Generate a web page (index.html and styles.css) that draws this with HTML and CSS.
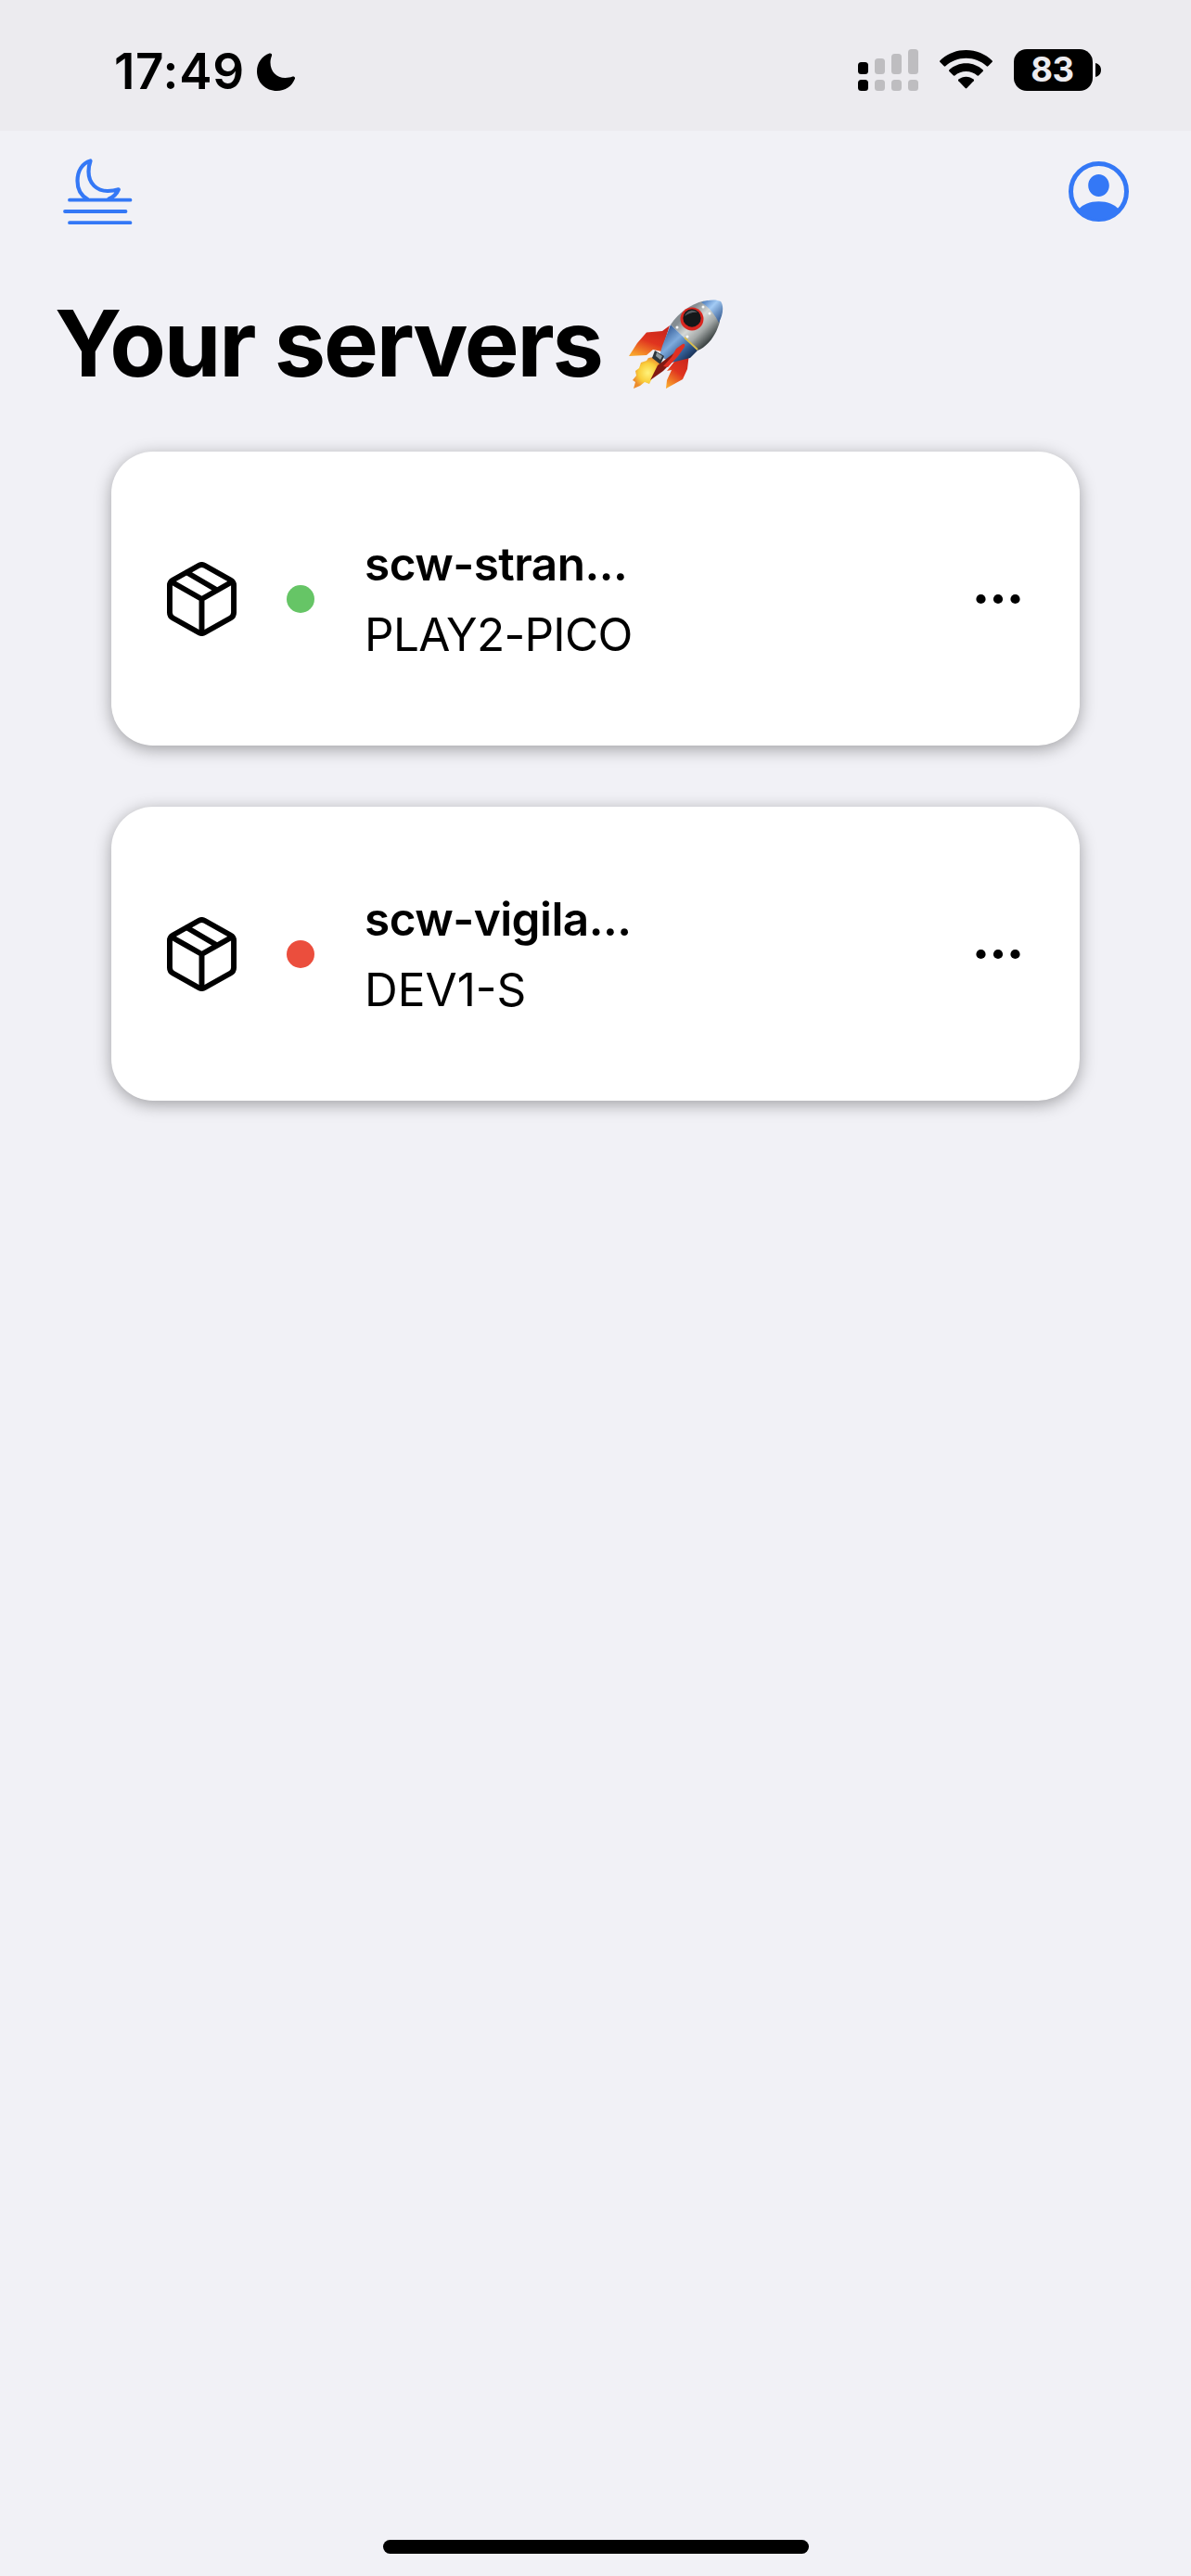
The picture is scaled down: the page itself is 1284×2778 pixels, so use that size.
FILE: index.html
```html
<!DOCTYPE html>
<html lang="en">
<head>
<meta charset="utf-8">
<title>Your servers</title>
<link rel="stylesheet" href="styles.css">
</head>
<body>
<svg class="defs" width="0" height="0" aria-hidden="true">
  <symbol id="package" viewBox="0 0 76 80" preserveAspectRatio="none">
    <g fill="none" stroke="#000" stroke-width="6" stroke-linejoin="round" stroke-linecap="round">
      <path d="M34.500 4.000 Q38 2 41.500 4.000 L69.500 19.500 Q73 21.500 73 25 V54.500 Q73 58.500 69.500 60.500 L41.500 76 Q38 78 34.500 76 L6.500 60.500 Q3 58.500 3 54.500 V25 Q3 21.500 6.500 19.500 Z"/>
      <path d="M5 21.500 L38 40 L71 21.500 M38 40 V76 M22 11.500 L54 30"/>
    </g>
  </symbol>
  <symbol id="more" viewBox="0 0 48 12">
    <circle cx="5.500" cy="6" r="5.100"/><circle cx="24" cy="6" r="5.100"/><circle cx="42.500" cy="6" r="5.100"/>
  </symbol>
</svg>
<div class="screen">
  <header class="status">
    <div class="clock">
      <span class="time">17:49</span>
      <svg class="focus" viewBox="0 0 41 41"><path d="M13.500.6C15 0 16.600 1.200 16 2.900C14.600 6.500 14.500 8.600 14.500 10.500C14.500 20 21 27 30.500 27C33.500 27 35.800 26.600 38.400 25.600C40 25 41.500 26.300 40.900 28C37.700 36 30.500 41 21.500 41C9.500 41 0 32 0 20C0 11 5.300 3.600 13.500.6Z"/></svg>
    </div>
    <div class="indicators">
      <svg class="signal" viewBox="0 0 65 45">
        <g><rect y="14" width="11" height="13" rx="3.500"/><rect y="33" width="11" height="12" rx="3.500"/></g>
        <g fill="#bebdc0"><rect x="18" y="10" width="11" height="17" rx="3.500"/><rect x="36" y="5" width="11" height="22" rx="3.500"/><rect x="54" width="11" height="27" rx="3.500"/><rect x="18" y="33" width="11" height="12" rx="3.500"/><rect x="36" y="33" width="11" height="12" rx="3.500"/><rect x="54" y="33" width="11" height="12" rx="3.500"/></g>
      </svg>
      <svg class="wifi" viewBox="0 0 57 42"><path d="M28.500 0C39.500 0 49.500 4.300 56.500 11.300Q57.400 12.200 56.500 13.100L52.300 17.300Q51.500 18.100 50.600 17.300C44.500 11.800 37 8.800 28.500 8.800S12.500 11.800 6.400 17.300Q5.500 18.100 4.700 17.300L.5 13.100Q-.4 12.200.5 11.300C7.500 4.300 17.500 0 28.500 0Z"/><path d="M28.500 14.300C35.500 14.300 41.800 17 46.600 21.300Q47.500 22.200 46.600 23.100L42.300 27.300Q41.500 28.100 40.600 27.400C37.300 24.600 33.200 23 28.500 23S19.700 24.600 16.400 27.400Q15.500 28.100 14.700 27.300L10.400 23.100Q9.500 22.200 10.400 21.300C15.200 17 21.500 14.300 28.500 14.300Z"/><path d="M28.500 28.700C31.600 28.700 34.300 29.800 36.600 31.500Q37.500 32.300 36.700 33.200L29.300 41Q28.500 41.800 27.700 41L20.300 33.200Q19.500 32.300 20.400 31.500C22.700 29.800 25.400 28.700 28.500 28.700Z"/></svg>
      <div class="battery"><span class="level">83</span><svg class="nub" viewBox="0 0 6 15"><path d="M0 0C4 1 6 4 6 7.500S4 14 0 15Z"/></svg></div>
    </div>
  </header>
  <nav class="toolbar">
    <svg class="haze" viewBox="0 0 76 72" fill="none" stroke="#3478f6" stroke-linecap="round" stroke-linejoin="round">
      <path stroke-width="4.200" d="M26 43.500C19 39.500 15.500 32 15.500 24C15.500 13.500 20.500 5 29.500 2.500C28.300 6 27.500 10 27.500 14C27.500 27 36.500 35 48 35C52.500 35 56 34.500 59.800 33.300C58 37.500 54 41.500 49.500 43.500"/>
      <path stroke-width="3.800" d="M7 44.700H72.500M2 57H67.500M7 69.200H72.500"/>
    </svg>
    <svg class="profile" viewBox="0 0 65 65">
      <circle cx="32.500" cy="32.500" r="30" fill="none" stroke="#3478f6" stroke-width="5"/>
      <path fill="#3478f6" d="M32.500 14C38.700 14 43.800 19.200 43.800 26S38.700 38 32.500 38S21.200 32.800 21.200 26S26.300 14 32.500 14ZM11 51.500C15.500 46.500 23 43.300 32.500 43.300S49.500 46.500 54 51.500C49 58 41 62 32.500 62S16 58 11 51.500Z"/>
    </svg>
  </nav>
  <h1 class="title"><span class="title-text">Your servers</span>
    <svg class="rocket" viewBox="0 0 102 98">
      <defs>
        <linearGradient id="hull" gradientUnits="userSpaceOnUse" x1="58" y1="20" x2="84" y2="47"><stop offset="0" stop-color="#858d92"/><stop offset=".35" stop-color="#d5d8d6"/><stop offset=".65" stop-color="#a4a9a8"/><stop offset="1" stop-color="#3e4545"/></linearGradient>
        <linearGradient id="blue" gradientUnits="userSpaceOnUse" x1="40" y1="34" x2="68" y2="64"><stop offset="0" stop-color="#3f67a0"/><stop offset=".35" stop-color="#7fabdd"/><stop offset=".7" stop-color="#345f96"/><stop offset="1" stop-color="#15294b"/></linearGradient>
        <linearGradient id="nose" x1="0" y1="0" x2="1" y2="1"><stop offset="0" stop-color="#3e6eb0"/><stop offset=".4" stop-color="#a3cbf5"/><stop offset="1" stop-color="#23477f"/></linearGradient>
        <linearGradient id="fin" x1=".7" y1="0" x2=".2" y2="1"><stop offset="0" stop-color="#c9251b"/><stop offset=".5" stop-color="#e0341f"/><stop offset="1" stop-color="#f9a52b"/></linearGradient>
        <radialGradient id="flame"><stop offset="0" stop-color="#fff27a"/><stop offset=".6" stop-color="#f9cf3c"/><stop offset="1" stop-color="#ec8c2d"/></radialGradient>
      </defs>
      <path fill="url(#flame)" d="M27 62L37 71L33 79L26 83L22 91L17 89L12 93L5 96L7 89L4 87L8 82L7 77L11 74L13 68L19 66L21 63Z"/>
      <path fill="url(#fin)" d="M44 28L36 34L19 35.500L9 47L0 61L19 60L26 54L35 56Z"/>
      <path fill="url(#fin)" d="M65 58L49 67L41 77L46 76L41 87L40 96L58 86L63 75Z"/>
      <path fill="url(#blue)" d="M45 27L74 55L66 63L46 68L33 61L36 50Z"/>
      <path fill="url(#hull)" d="M45 27C54 14 66 5 81 1.500C91 7 98 15 98 24C94 38 86 50 74 55Z"/>
      <path fill="url(#nose)" d="M78 3C86 0 94-.5 99 2C103 8 101 17 97 25C92 15 86 8 78 3Z"/>
      <path fill="none" stroke="#d7bd4e" stroke-width="1.800" d="M60 41L74 54"/>
      <circle cx="68" cy="21" r="12.500" fill="#d9261f"/>
      <circle cx="68" cy="20" r="9.700" fill="#151719"/><path fill="#555a5f" d="M60 18C63 11 70 10 74 14C70 13 64 15 60 18Z"/>
      <path fill="#2d353c" d="M28 55L38 61L34 70L25 63Z"/><path fill="#8f999f" d="M30 57L36 61L34 65L29 61Z"/>
      <path fill="#831912" d="M23 87L31 71L51 56L48 66L37 77Z"/>
      <path fill="#df3023" d="M58 48Q61 47 60 51L53 61L42 73L37 72L46 62L51 53Z"/>
      <g fill="#f8faf9"><circle cx="80" cy="8" r="1.500"/><circle cx="87" cy="15" r="1.500"/><circle cx="52" cy="30" r="1.500"/><circle cx="63" cy="40" r="1.500"/></g>
    </svg>
  </h1>
  <main class="servers">
    <article class="card">
      <svg class="package"><use href="#package"/></svg>
      <span class="dot running"></span>
      <div class="info"><div class="name">scw-stran...</div><div class="type">PLAY2-PICO</div></div>
      <svg class="more"><use href="#more"/></svg>
    </article>
    <article class="card">
      <svg class="package"><use href="#package"/></svg>
      <span class="dot stopped"></span>
      <div class="info"><div class="name">scw-vigila...</div><div class="type short">DEV1-S</div></div>
      <svg class="more"><use href="#more"/></svg>
    </article>
  </main>
  <div class="home"></div>
</div>
</body>
</html>
```
FILE: styles.css
```css
* { box-sizing: border-box; }
body { margin: 0; background: #f1f1f6; color: #000; font-family: Inter, "Liberation Sans", sans-serif; }
svg { display: block; flex: none; }
.defs { position: absolute; }
.screen { height: 2778px; display: flex; flex-direction: column; }

.status { height: 141px; padding: 53px 97px 0 123px; background: #ecebef; display: flex; justify-content: space-between; align-items: flex-start; }
.clock { display: flex; align-items: flex-start; }
.time { width: 154px; font-size: 53px; font-weight: 600; line-height: 48px; letter-spacing: .7px; white-space: nowrap; }
.focus { width: 41px; height: 41px; margin-top: 4px; }
.indicators { display: flex; align-items: flex-start; }
.signal { width: 65px; height: 45px; }
.wifi { width: 57px; height: 42px; margin: 1px 23px 0; }
.battery { display: flex; align-items: center; gap: 3px; }
.level { width: 85px; height: 45px; padding-right: 2px; border-radius: 14px; background: #000; color: #ecebef; font-size: 36.500px; font-weight: 700; line-height: 45px; letter-spacing: -.3px; text-align: center; }
.nub { width: 6px; height: 15px; }

.toolbar { height: 132px; padding: 30px 67px 0 68px; display: flex; justify-content: space-between; }
.haze { width: 76px; height: 72px; }
.profile { width: 65px; height: 65px; margin-top: 3px; }

.title { margin: 0; height: 214px; padding: 50px 0 0 59px; display: flex; align-items: flex-start; font-size: 99px; font-weight: 700; }
.title-text { width: 619px; line-height: 95px; letter-spacing: -2.200px; white-space: nowrap; }
.rocket { width: 102px; height: 98px; }

.servers { flex: 1; padding: 0 120px; display: flex; flex-direction: column; gap: 66px; }
.card { height: 317px; padding: 0 64px 0 60px; border-radius: 45px; background: #fff; box-shadow: 0 4px 18px rgba(0, 0, 0, .34); display: flex; align-items: center; }
.package { width: 75px; height: 80px; }
.dot { width: 30px; height: 30px; margin-left: 54px; border-radius: 50%; }
.running { background: #66c566; }
.stopped { background: #eb4e3d; }
.info { flex: 1; margin-left: 54px; font-size: 49.500px; line-height: 76px; white-space: nowrap; }
.name { font-weight: 600; letter-spacing: -.55px; }
.type { font-weight: 400; letter-spacing: -.7px; }
.short { letter-spacing: 0; }
.more { width: 48px; height: 12px; }

.home { width: 459px; height: 15px; margin: 0 auto 24px; border-radius: 8px; background: #000; }
```
